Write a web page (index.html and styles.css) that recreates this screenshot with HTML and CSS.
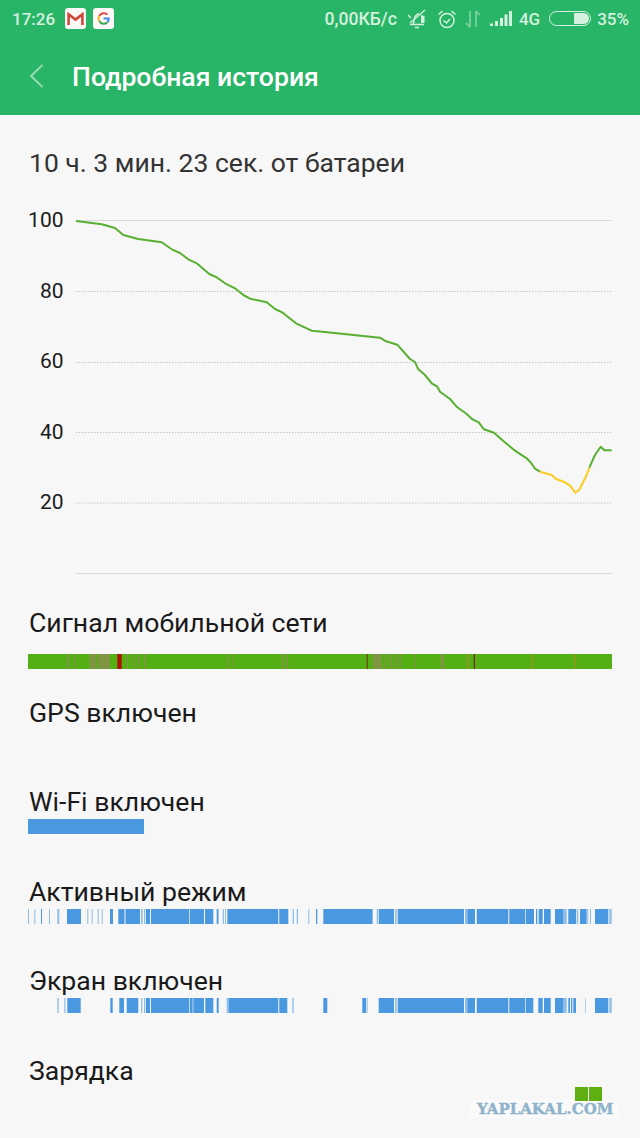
FILE: index.html
```html
<!DOCTYPE html>
<html lang="ru">
<head>
  <meta charset="UTF-8">
  <title>Подробная история</title>
  <meta name="viewport" content="width=device-width, initial-scale=1">
  <link rel="stylesheet" href="styles.css">
</head>
<body>
  <header class="top">
    <div class="status">
      <span class="time">17:26</span>
      <span class="tile">
        <svg width="17" height="13" viewBox="0 0 16 12"><path d="M1.500 12V2L8 7l6.500-5v10" fill="none" stroke="#d0443a" stroke-width="2.400"/></svg>
      </span>
      <span class="tile">
        <svg width="13" height="13" viewBox="0 0 13 13" fill="none" stroke-width="2">
          <path d="M10.500 2.600A5.200 5.200 0 0 0 2.300 3.900" stroke="#e0493c"/>
          <path d="M2.300 3.900a5.200 5.200 0 0 0 0 5.200" stroke="#f2bb2c"/>
          <path d="M2.300 9.100a5.200 5.200 0 0 0 8 1.300" stroke="#38a853"/>
          <path d="M10.300 10.400a5.200 5.200 0 0 0 1.400-4H6.600" stroke="#4485f0"/>
        </svg>
      </span>
      <span class="status-right">
        <span class="speed">0,00КБ/с</span>
        <svg class="ico-bell" width="21" height="20" viewBox="0 0 21 20" fill="none" stroke="#d5f0df" stroke-width="1.400">
          <path d="M6 15c1.500-2 1-5 2-7.500C9 6 10 5 12 4.500"/>
          <path d="M3 15.500h14M8 18.500h4M18 1L3 14M1 6l3 3"/>
          <path d="M14 6l3.500 1v7H14z" fill="#d5f0df" stroke="none"/>
        </svg>
        <svg class="ico-alarm" width="20" height="20" viewBox="0 0 20 20" fill="none" stroke="#d5f0df" stroke-width="1.500">
          <circle cx="10" cy="11.500" r="7"/>
          <path d="M6.500 11.500l3 2.500 3.500-4M1.500 5.500l4-3.500M18.500 5.500l-4-3.500"/>
        </svg>
        <svg class="ico-data" width="16" height="18" viewBox="0 0 16 18" fill="none" stroke="#6fcf9a" stroke-width="2">
          <path d="M5 1v16M1 13l4 4M11 17V1M15 5l-4-4"/>
        </svg>
        <svg class="ico-signal" width="22" height="15" viewBox="0 0 22 15" fill="#d5f0df">
          <rect x="0" y="12.500" width="3" height="2.500"/>
          <rect x="5" y="10" width="3" height="5"/>
          <rect x="10" y="7" width="3" height="8"/>
          <rect x="14.500" y="3.500" width="3" height="11.500"/>
          <rect x="19" y="0" width="3" height="15"/>
        </svg>
        <span class="net">4G</span>
        <span class="batt"><span class="batt-fill"></span></span>
        <span class="pct">35%</span>
      </span>
    </div>
    <div class="appbar">
      <svg class="back" width="15" height="24" viewBox="0 0 15 24"><path d="M13.500 1L2 12l11.500 11" fill="none" stroke="#9adcb6" stroke-width="1.800"/></svg>
      <h1>Подробная история</h1>
    </div>
  </header>

  <main>
    <p class="summary">10 ч. 3 мин. 23 сек. от батареи</p>

    <svg class="chart" width="640" height="403" viewBox="0 205 640 403">
      <line class="grid-solid" x1="76" y1="220.500" x2="612" y2="220.500"/>
      <line class="grid-dot" x1="76" y1="291.500" x2="612" y2="291.500"/>
      <line class="grid-dot" x1="76" y1="362.500" x2="612" y2="362.500"/>
      <line class="grid-dot" x1="76" y1="432.500" x2="612" y2="432.500"/>
      <line class="grid-dot" x1="76" y1="503" x2="612" y2="503"/>
      <line class="grid-solid" x1="76" y1="573.500" x2="612" y2="573.500"/>
      <text class="tick" x="63.500" y="226.500">100</text>
      <text class="tick" x="63.500" y="297.500">80</text>
      <text class="tick" x="63.500" y="368">60</text>
      <text class="tick" x="63.500" y="438.500">40</text>
      <text class="tick" x="63.500" y="509">20</text>
      <polyline class="curve" points="76,221 101.700,224.300 115,228 123.300,235 138.300,239 161.700,242.300 171.700,249.300 180,253 188.300,259.300 197.300,263.700 209.300,274 217.300,277.700 225,283.300 235,288.300 243.300,295 250,298.700 266.700,302.300 275,309 282.700,312.700 296,323.300 311.700,330.700 320,331.500 380,337.700 386,341.300 397.300,344.700 410,359 415,362 418.300,369.300 425,375 431.700,383.300 437.300,386.700 440,391.700 450,399 457.300,407.300 466.700,414 472,419 478.700,422.300 484,429.300 494,432.700 503.300,441 515,450.700 526.700,458.300 531,462.700 535,468.700 540,471.700"/>
      <polyline class="curve low" points="540,471.700 551.700,475 556,479 565,482.300 570,485.700 575.300,492.700 579.300,489.700 586.700,475 589.300,467.700"/>
      <polyline class="curve" points="589.300,467.700 595,455 600.700,446.700 604.300,450.300 611.700,450.300"/>
    </svg>

    <section class="row">
      <div class="label">Сигнал мобильной сети</div>
      <svg class="bar bar-signal" width="584" height="15" viewBox="28 0 584 15">
        <rect class="sig" x="28" y="0" width="584" height="15"/>
        <rect class="mid" x="66.700" y="0" width="2" height="15"/>
        <rect class="mid" x="74" y="0" width="1.300" height="15"/>
        <rect class="mid" x="89.300" y="0" width="7.400" height="15"/>
        <rect class="mid" x="98.300" y="0" width="11.700" height="15"/>
        <rect class="bad" x="117.300" y="0" width="4.400" height="15"/>
        <rect class="mid" x="126.700" y="0" width="1.500" height="15"/>
        <rect class="mid" x="133.300" y="0" width="1.500" height="15"/>
        <rect class="mid" x="138.300" y="0" width="1.500" height="15"/>
        <rect class="mid" x="144" y="0" width="1.700" height="15"/>
        <rect class="mid" x="227.300" y="0" width="1.300" height="15"/>
        <rect class="mid" x="232.300" y="0" width="1" height="15"/>
        <rect class="mid" x="281.700" y="0" width="1.700" height="15"/>
        <rect class="mid" x="286" y="0" width="1.700" height="15"/>
        <rect class="dark" x="366.700" y="0" width="1" height="15"/>
        <rect class="mid" x="372.700" y="0" width="9" height="15"/>
        <rect class="mid" x="385" y="0" width="1.700" height="15"/>
        <rect class="mid" x="390" y="0" width="1.700" height="15"/>
        <rect class="mid" x="395" y="0" width="1.700" height="15"/>
        <rect class="mid" x="399.300" y="0" width="1.700" height="15"/>
        <rect class="mid" x="414" y="0" width="1.300" height="15"/>
        <rect class="mid" x="440.700" y="0" width="3.300" height="15"/>
        <rect class="warm" x="467.300" y="0" width="1.300" height="15"/>
        <rect class="dark" x="473.700" y="0" width="1.300" height="15"/>
        <rect class="warm" x="531.700" y="0" width="1" height="15"/>
        <rect class="warm" x="574" y="0" width="1" height="15"/>
      </svg>
    </section>

    <section class="row">
      <div class="label">GPS включен</div>
    </section>

    <section class="row">
      <div class="label">Wi-Fi включен</div>
      <svg class="bar" width="584" height="15" viewBox="28 0 584 15">
        <rect class="on" x="28" y="0" width="116" height="15"/>
      </svg>
    </section>

    <section class="row">
      <div class="label">Активный режим</div>
      <svg class="bar" width="584" height="15" viewBox="28 0 584 15">
        <rect class="on thin" x="28" y="0" width="1" height="15"/>
        <rect class="on thin" x="34.300" y="0" width="1" height="15"/>
        <rect class="on" x="41" y="0" width="1" height="15"/>
        <rect class="on thin" x="49" y="0" width="1" height="15"/>
        <rect class="on thin" x="57.300" y="0" width="2" height="15"/>
        <rect class="on" x="67" y="0" width="14" height="15"/>
        <rect class="on thin" x="87.300" y="0" width="1" height="15"/>
        <rect class="on thin" x="91.700" y="0" width="1" height="15"/>
        <rect class="on thin" x="97.700" y="0" width="1" height="15"/>
        <rect class="on thin" x="101.700" y="0" width="1" height="15"/>
        <rect class="on" x="110" y="0" width="3" height="15"/>
        <rect class="on" x="118.300" y="0" width="6.200" height="15"/>
        <rect class="on" x="125.500" y="0" width="14.500" height="15"/>
        <rect class="on thin" x="141" y="0" width="1.700" height="15"/>
        <rect class="on thin" x="144" y="0" width="1.300" height="15"/>
        <rect class="on" x="146" y="0" width="4" height="15"/>
        <rect class="on" x="151" y="0" width="38.300" height="15"/>
        <rect class="on" x="190" y="0" width="14" height="15"/>
        <rect class="on" x="205" y="0" width="8.300" height="15"/>
        <rect class="on" x="216.700" y="0" width="1.800" height="15"/>
        <rect class="on thin" x="222.700" y="0" width="1.300" height="15"/>
        <rect class="on thin" x="225" y="0" width="1" height="15"/>
        <rect class="on" x="227.300" y="0" width="51" height="15"/>
        <rect class="on" x="279.300" y="0" width="9" height="15"/>
        <rect class="on thin" x="292.700" y="0" width="1.300" height="15"/>
        <rect class="on thin" x="296.700" y="0" width="1.300" height="15"/>
        <rect class="on thin" x="308.300" y="0" width="1" height="15"/>
        <rect class="on" x="316" y="0" width="1.300" height="15"/>
        <rect class="on" x="323.300" y="0" width="49.300" height="15"/>
        <rect class="on thin" x="376.700" y="0" width="1.300" height="15"/>
        <rect class="on" x="378.700" y="0" width="15.300" height="15"/>
        <rect class="on thin" x="395" y="0" width="1.700" height="15"/>
        <rect class="on" x="397.700" y="0" width="66.300" height="15"/>
        <rect class="on thin" x="465" y="0" width="2.300" height="15"/>
        <rect class="on" x="467.300" y="0" width="7.700" height="15"/>
        <rect class="on" x="476.700" y="0" width="31.600" height="15"/>
        <rect class="on" x="509.300" y="0" width="15.700" height="15"/>
        <rect class="on" x="525.700" y="0" width="8.300" height="15"/>
        <rect class="on" x="536" y="0" width="1.300" height="15"/>
        <rect class="on" x="538.700" y="0" width="4" height="15"/>
        <rect class="on" x="544" y="0" width="6.700" height="15"/>
        <rect class="on" x="555" y="0" width="8.300" height="15"/>
        <rect class="on thin" x="563.300" y="0" width="3.400" height="15"/>
        <rect class="on" x="568.300" y="0" width="7.700" height="15"/>
        <rect class="on thin" x="576.700" y="0" width="1.600" height="15"/>
        <rect class="on" x="580" y="0" width="6.700" height="15"/>
        <rect class="on thin" x="587.300" y="0" width="1" height="15"/>
        <rect class="on thin" x="590" y="0" width="1" height="15"/>
        <rect class="on" x="595" y="0" width="13.300" height="15"/>
        <rect class="on thin" x="609.300" y="0" width="2.400" height="15"/>
      </svg>
    </section>

    <section class="row">
      <div class="label">Экран включен</div>
      <svg class="bar" width="584" height="15" viewBox="28 0 584 15">
        <rect class="on thin" x="57.300" y="0" width="1.400" height="15"/>
        <rect class="on thin" x="64.300" y="0" width="1.200" height="15"/>
        <rect class="on" x="67.300" y="0" width="13.400" height="15"/>
        <rect class="on" x="110.300" y="0" width="2.400" height="15"/>
        <rect class="on" x="119.300" y="0" width="4.700" height="15"/>
        <rect class="on" x="126.700" y="0" width="11.600" height="15"/>
        <rect class="on thin" x="141" y="0" width="1.300" height="15"/>
        <rect class="on thin" x="144" y="0" width="1.300" height="15"/>
        <rect class="on" x="146" y="0" width="4" height="15"/>
        <rect class="on" x="151" y="0" width="38.300" height="15"/>
        <rect class="on" x="190" y="0" width="2.700" height="15"/>
        <rect class="on" x="193.300" y="0" width="10.700" height="15"/>
        <rect class="on" x="205.300" y="0" width="8" height="15"/>
        <rect class="on" x="216.700" y="0" width="2" height="15"/>
        <rect class="on thin" x="226.700" y="0" width="2" height="15"/>
        <rect class="on" x="228.700" y="0" width="49.600" height="15"/>
        <rect class="on" x="279.300" y="0" width="8" height="15"/>
        <rect class="on thin" x="292.300" y="0" width="1.400" height="15"/>
        <rect class="on" x="323.300" y="0" width="4" height="15"/>
        <rect class="on" x="362.300" y="0" width="3.700" height="15"/>
        <rect class="on thin" x="366.700" y="0" width="1" height="15"/>
        <rect class="on" x="378.700" y="0" width="15.300" height="15"/>
        <rect class="on thin" x="395" y="0" width="1.700" height="15"/>
        <rect class="on" x="397.700" y="0" width="66.300" height="15"/>
        <rect class="on thin" x="465" y="0" width="2.300" height="15"/>
        <rect class="on" x="467.300" y="0" width="7.700" height="15"/>
        <rect class="on" x="476.700" y="0" width="31.600" height="15"/>
        <rect class="on" x="509.300" y="0" width="15.700" height="15"/>
        <rect class="on" x="525.700" y="0" width="7.600" height="15"/>
        <rect class="on" x="538.300" y="0" width="4.400" height="15"/>
        <rect class="on" x="544" y="0" width="6.700" height="15"/>
        <rect class="on" x="555" y="0" width="8.300" height="15"/>
        <rect class="on thin" x="563.300" y="0" width="3.400" height="15"/>
        <rect class="on" x="568.300" y="0" width="1.700" height="15"/>
        <rect class="on" x="571" y="0" width="1.300" height="15"/>
        <rect class="on" x="573.300" y="0" width="2.700" height="15"/>
        <rect class="on thin" x="585.300" y="0" width="0.700" height="15"/>
        <rect class="on" x="595" y="0" width="13.300" height="15"/>
        <rect class="on thin" x="609.300" y="0" width="2.400" height="15"/>
      </svg>
    </section>

    <section class="row">
      <div class="label">Зарядка</div>
    </section>
  </main>

  <div class="mark">
    <span class="mark-text">YAPLAKAL.COM</span>
    <span class="mark-squares"><i></i><i></i></span>
  </div>
</body>
</html>
```

FILE: styles.css
```css
html, body {
  margin: 0;
  padding: 0;
}
body {
  position: relative;
  height: 1138px;
  overflow: hidden;
  background-color: #f7f7f7;
  color: #1a1a1a;
  font-family: Roboto, sans-serif;
}

/* шапка */
.top {
  height: 115px;
  background-color: #29b567;
}
.status {
  height: 37px;
  display: flex;
  align-items: center;
  padding: 0 11px 0 12px;
  color: #d5f0df;
  font-size: 17px;
  font-weight: 500;
}
.time {
  margin-right: 10px;
}
.tile {
  width: 21px;
  height: 21px;
  margin-right: 7px;
  display: flex;
  align-items: center;
  justify-content: center;
  background-color: #fbf8f6;
  border-radius: 3px;
}
.status-right {
  margin-left: auto;
  display: flex;
  align-items: center;
}
.speed {
  margin-right: 10px;
  font-size: 17.600px;
}
.ico-bell {
  margin-right: 9px;
}
.ico-alarm {
  margin-right: 8px;
}
.ico-data {
  margin-right: 9px;
}
.ico-signal {
  margin-right: 7px;
}
.net {
  margin-right: 9px;
}
.batt {
  width: 42px;
  height: 15px;
  margin-right: 6px;
  box-sizing: border-box;
  padding: 1px;
  display: flex;
  justify-content: flex-end;
  border: 1px solid #d5f0df;
  border-radius: 8px;
}
.batt-fill {
  width: 15px;
  background-color: #d5f0df;
  border-radius: 1px 6px 6px 1px;
}
.appbar {
  height: 78px;
  display: flex;
  align-items: center;
  padding-left: 29px;
}
.back {
  margin-right: 28px;
}
.appbar h1 {
  margin: 0;
  color: #fff;
  font-size: 26.600px;
  font-weight: 500;
}

/* основная часть */
.summary {
  margin: 0;
  padding: 33px 0 0 29px;
  height: 57px;
  line-height: 30px;
  font-size: 26.500px;
  color: #333;
}
.chart {
  display: block;
}
.grid-solid {
  stroke: #d9d9d9;
  stroke-width: 1;
}
.grid-dot {
  stroke: #c4c4c4;
  stroke-width: 1;
  stroke-dasharray: 1.500 1.500;
}
.tick {
  fill: #1a1a1a;
  font-size: 21px;
  text-anchor: end;
}
.curve {
  fill: none;
  stroke: #57b030;
  stroke-width: 2;
  stroke-linejoin: round;
}
.curve.low {
  stroke: #fccc1f;
}

/* строки */
.row {
  height: 89.500px;
}
.label {
  height: 30px;
  line-height: 30px;
  padding-left: 29px;
  font-size: 26.600px;
}
.bar {
  display: block;
  margin: 2px 0 0 28px;
}
.bar-signal {
  margin-top: 16px;
}
.on {
  fill: #4a98e0;
}
.thin {
  opacity: 0.6;
}
.sig {
  fill: #54af15;
}
.mid {
  fill: #8f8c50;
  opacity: 0.75;
}
.bad {
  fill: #ab1200;
}
.dark {
  fill: #7a2a08;
}
.warm {
  fill: #b0892a;
}

/* водяной знак */
.mark {
  position: absolute;
  left: 470px;
  top: 1087px;
  width: 148px;
  height: 31px;
}
.mark-squares {
  position: absolute;
  left: 105px;
  top: 0;
  display: flex;
  gap: 1px;
}
.mark-squares i {
  display: block;
  width: 13px;
  height: 14px;
  background-color: #5fae12;
}
.mark-text {
  position: absolute;
  left: 0;
  right: 0;
  top: 13px;
  padding-left: 7px;
  background-color: #fafafa;
  color: #8fb3ca;
  font-family: "DejaVu Serif", serif;
  font-size: 15px;
  font-weight: 700;
  line-height: 18px;
  white-space: nowrap;
  -webkit-text-stroke: 0.4px #8fb3ca;
}
```
